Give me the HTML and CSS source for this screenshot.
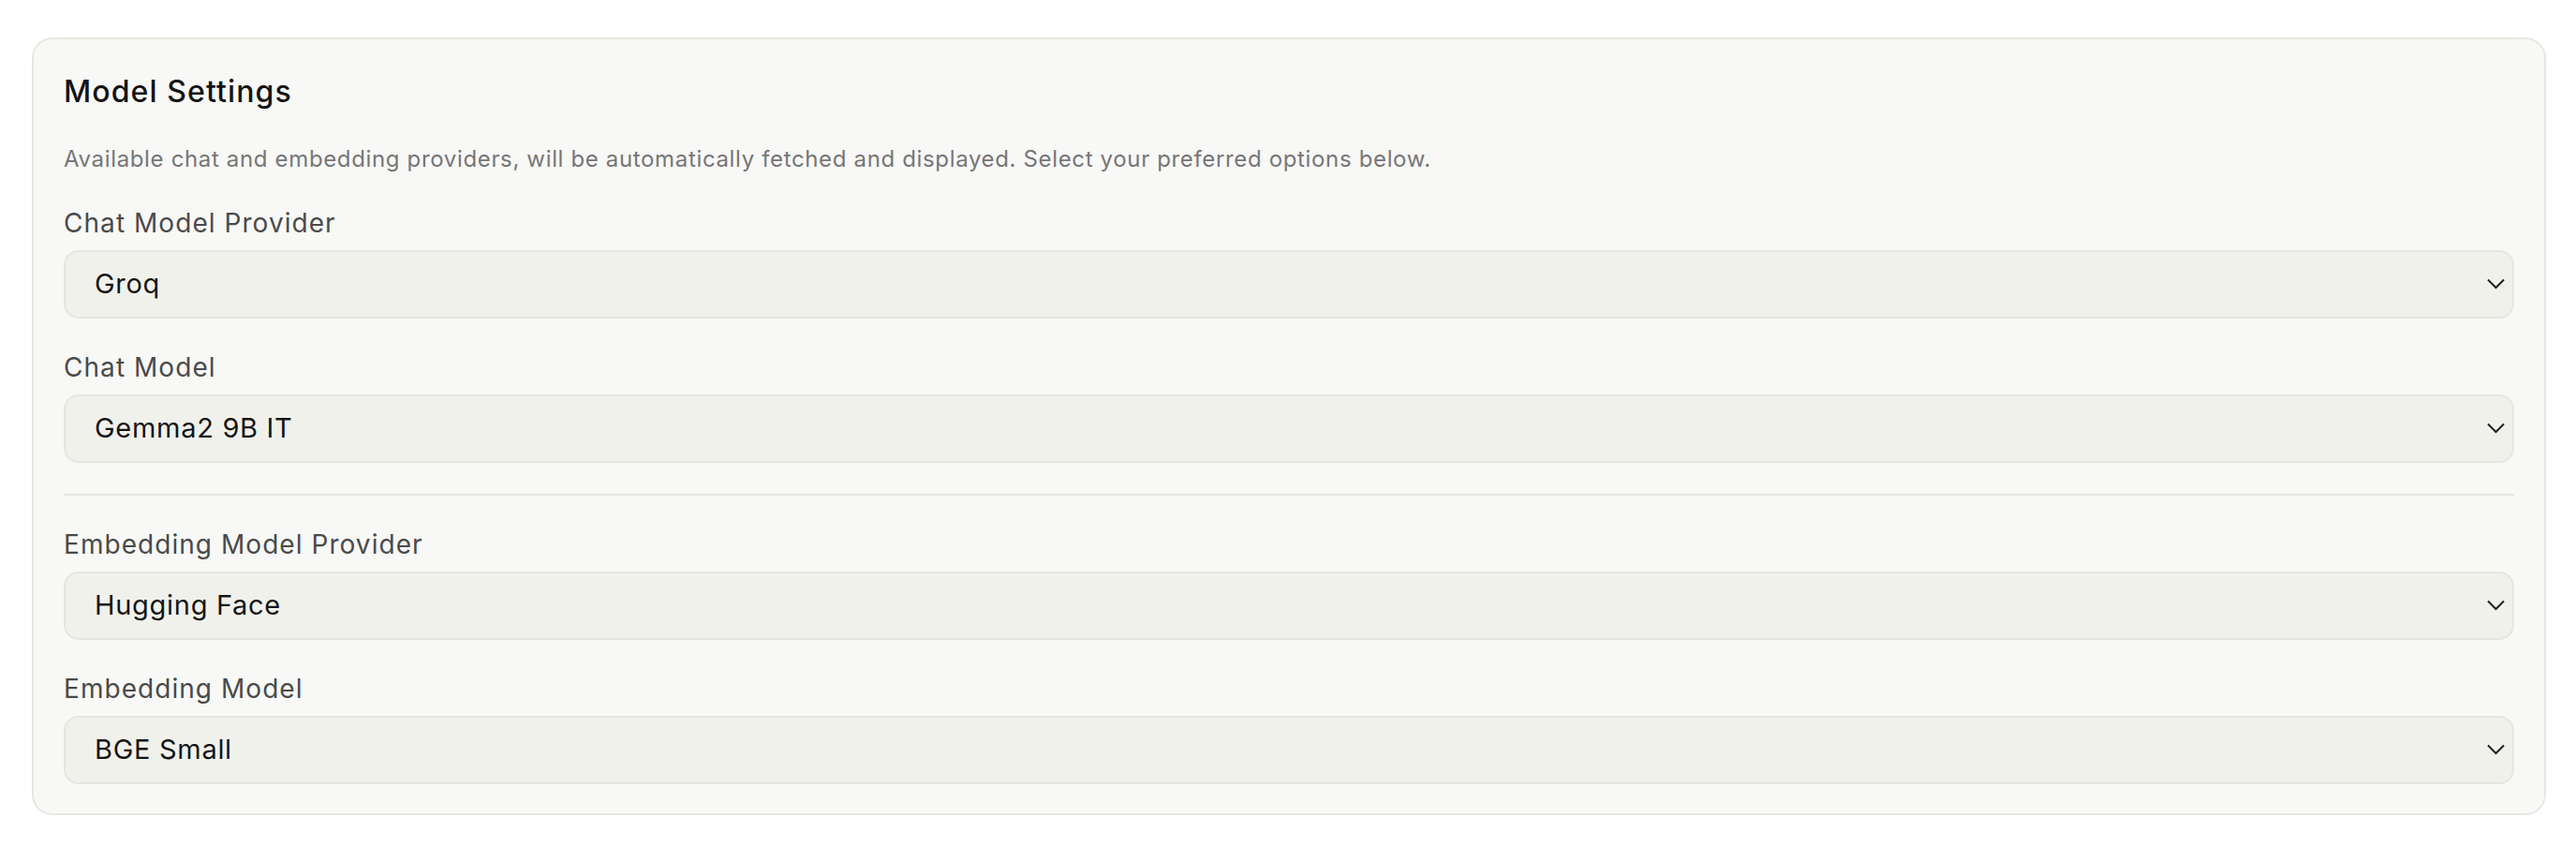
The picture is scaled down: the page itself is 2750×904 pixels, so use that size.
FILE: index.html
```html
<!DOCTYPE html>
<html lang="en">
<head>
<meta charset="utf-8">
<title>Model Settings</title>
<link rel="stylesheet" href="styles.css">
</head>
<body>
<section class="card">
  <h2 class="title">Model Settings</h2>
  <p class="desc">Available chat and embedding providers, will be automatically fetched and displayed. Select your preferred options below.</p>

  <div class="field">
    <label class="label">Chat Model Provider</label>
    <div class="select"><span class="value">Groq</span><svg class="chev" viewBox="0 0 19 12" width="19" height="12"><path d="M1 1.5 L9.5 10 L18 1.5" fill="none" stroke="#1f1f1f" stroke-width="2"/></svg></div>
  </div>

  <div class="field">
    <label class="label">Chat Model</label>
    <div class="select"><span class="value">Gemma2 9B IT</span><svg class="chev" viewBox="0 0 19 12" width="19" height="12"><path d="M1 1.5 L9.5 10 L18 1.5" fill="none" stroke="#1f1f1f" stroke-width="2"/></svg></div>
  </div>

  <hr class="divider">

  <div class="field">
    <label class="label">Embedding Model Provider</label>
    <div class="select"><span class="value">Hugging Face</span><svg class="chev" viewBox="0 0 19 12" width="19" height="12"><path d="M1 1.5 L9.5 10 L18 1.5" fill="none" stroke="#1f1f1f" stroke-width="2"/></svg></div>
  </div>

  <div class="field">
    <label class="label">Embedding Model</label>
    <div class="select"><span class="value">BGE Small</span><svg class="chev" viewBox="0 0 19 12" width="19" height="12"><path d="M1 1.5 L9.5 10 L18 1.5" fill="none" stroke="#1f1f1f" stroke-width="2"/></svg></div>
  </div>
</section>
</body>
</html>
```

FILE: styles.css
```css
* { box-sizing: border-box; }

html, body {
  background: #ffffff;
}

body {
  margin: 0;
  padding: 40px 32px 36px 34px;
  font-family: "Inter", "Noto Sans", "Liberation Sans", sans-serif;
}

.card {
  background: #f8f8f6;
  border: 2px solid #e7e7e2;
  border-radius: 22px;
  padding: 36px 32px 31px 32px;
  display: flex;
  flex-direction: column;
}

.title {
  margin: 0;
  font-size: 32px;
  line-height: 40px;
  font-weight: 500;
  letter-spacing: 1.1px;
  color: #141414;
}

.desc {
  margin: 35.5px 0 0 0;
  font-size: 24px;
  line-height: 32px;
  font-weight: 400;
  letter-spacing: 0.65px;
  color: #767676;
}

.field {
  margin-top: 34.6px;
  display: flex;
  flex-direction: column;
  gap: 10.6px;
}

.label {
  font-size: 28px;
  line-height: 36px;
  font-weight: 400;
  letter-spacing: 1.05px;
  color: #4a4a4a;
}

.select {
  height: 73px;
  background: #f1f1ec;
  border: 2px solid #e6e6e0;
  border-radius: 16px;
  padding: 0 8px 0 31px;
  display: flex;
  align-items: center;
  justify-content: space-between;
}

.value {
  font-size: 29px;
  line-height: 36px;
  letter-spacing: 0.7px;
  color: #151515;
}

.chev {
  display: block;
  flex: none;
}

.divider {
  margin: 32.7px 0 0 0;
  border: 0;
  height: 2px;
  background: #e5e5df;
}

.divider + .field {
  margin-top: 34.5px;
}
```
